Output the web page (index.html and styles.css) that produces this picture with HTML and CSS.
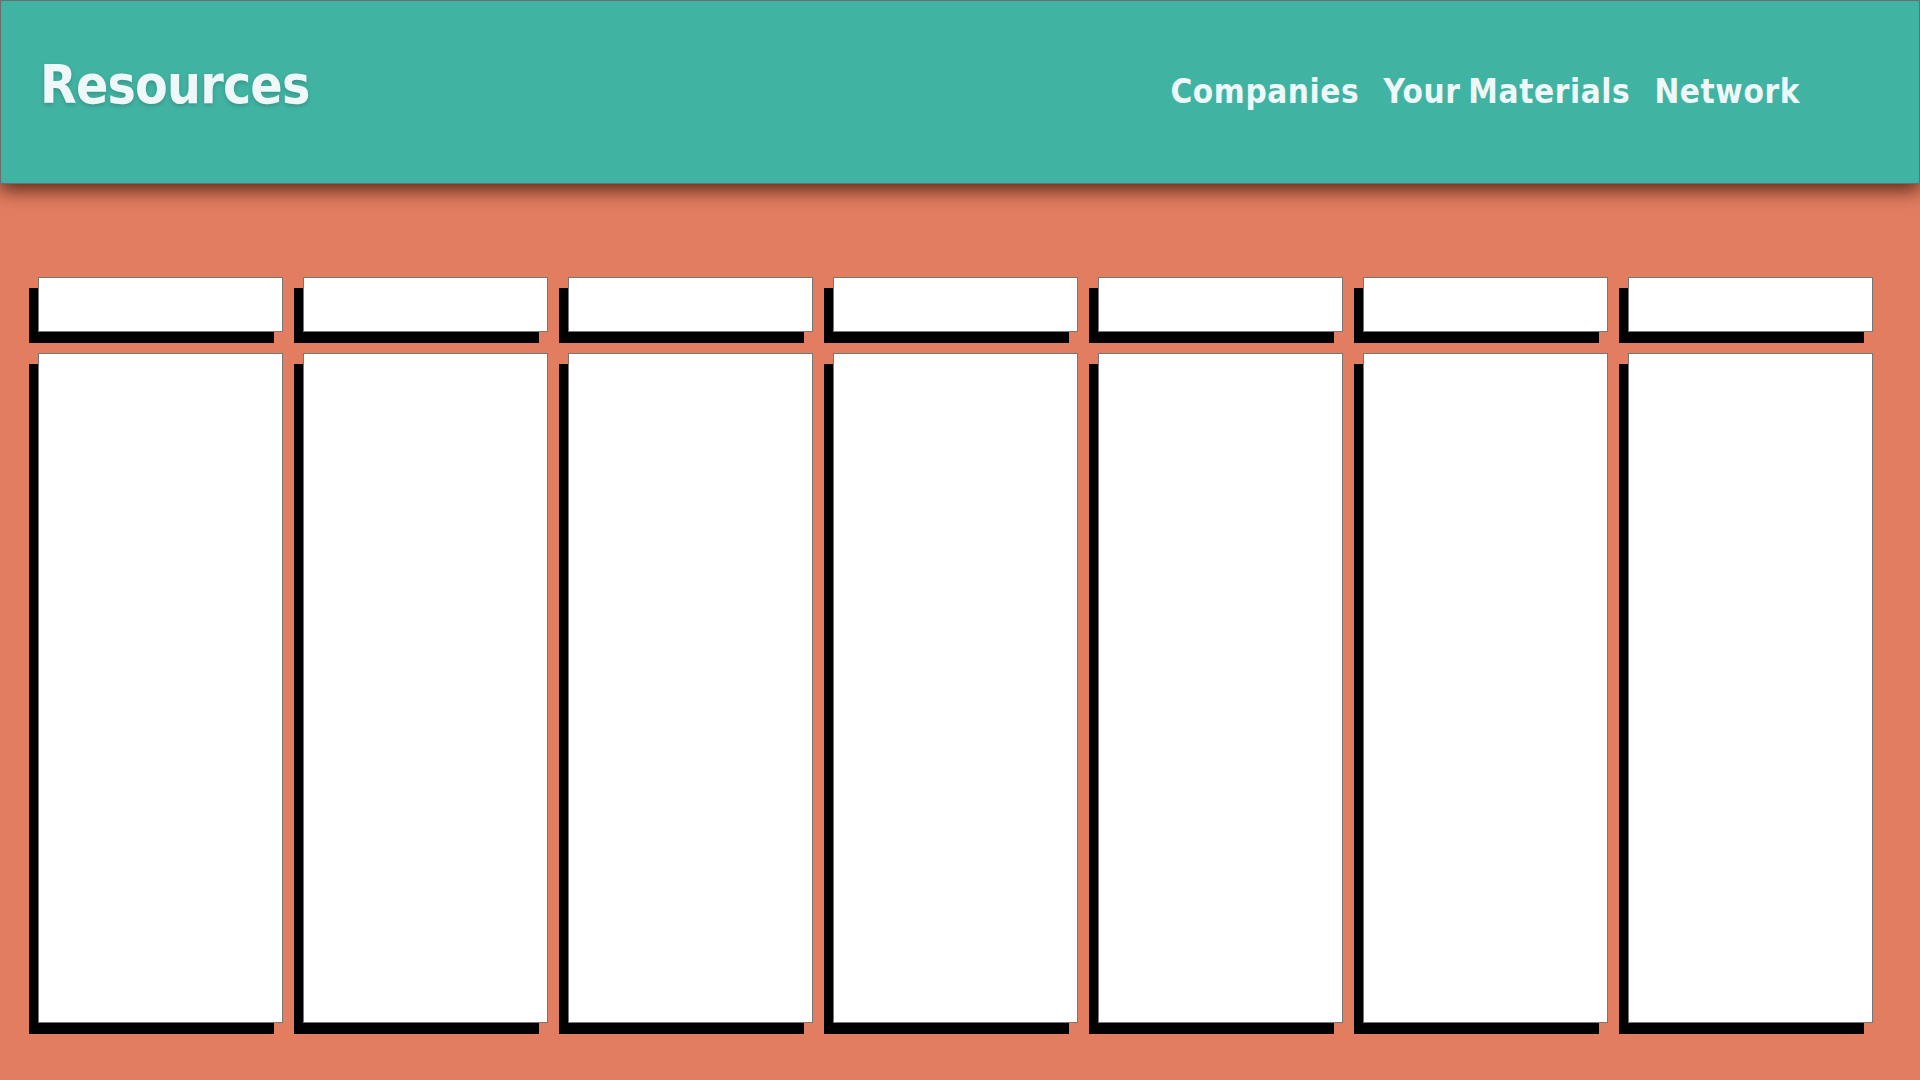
FILE: index.html
```html
<!DOCTYPE html>
<html>
<head>
<meta charset="utf-8">
<link rel="stylesheet" href="styles.css">
</head>
<body>
<header class="topbar">
  <h1 class="title">Resources</h1>
  <nav class="nav">
    <a class="nav-link">Companies</a>
    <a class="nav-link nav-link-tight">Your Materials</a>
    <a class="nav-link">Network</a>
  </nav>
</header>
<main class="board">
  <div class="col"><div class="card card-head"></div><div class="card card-body"></div></div>
  <div class="col"><div class="card card-head"></div><div class="card card-body"></div></div>
  <div class="col"><div class="card card-head"></div><div class="card card-body"></div></div>
  <div class="col"><div class="card card-head"></div><div class="card card-body"></div></div>
  <div class="col"><div class="card card-head"></div><div class="card card-body"></div></div>
  <div class="col"><div class="card card-head"></div><div class="card card-body"></div></div>
  <div class="col"><div class="card card-head"></div><div class="card card-body"></div></div>
</main>
</body>
</html>
```
FILE: styles.css
```css
* { box-sizing: border-box; }
html, body { margin: 0; padding: 0; }
body {
  background: #E27D60;
  width: 1920px;
  height: 1080px;
  overflow: hidden;
  font-family: "DejaVu Sans Condensed", "DejaVu Sans", sans-serif;
}
.topbar {
  position: relative;
  z-index: 2;
  height: 184px;
  background: #41B3A3;
  border: 1px solid #6e6e6e;
  box-shadow: 0 6px 18px rgba(40, 10, 0, 0.75);
  display: flex;
  align-items: baseline;
  justify-content: space-between;
  padding: 0 119px 0 39px;
}
.title {
  margin: 0;
  margin-top: 52px;
  font-size: 53px;
  font-weight: 600;
  letter-spacing: -0.8px;
  color: #EEF8F8;
  text-shadow: 0 2px 4px rgba(0, 0, 0, 0.18);
  line-height: 64px;
}
.nav {
  display: flex;
  gap: 24px;
}
.nav-link {
  font-size: 33px;
  font-weight: 600;
  color: #EEF8F8;
  letter-spacing: 0.6px;
}
.nav-link-tight { word-spacing: -3px; }
.board {
  display: flex;
  gap: 20px;
  padding: 93px 0 0 38px;
}
.col {
  display: flex;
  flex-direction: column;
  gap: 21px;
  width: 245px;
}
.card {
  background: #fff;
  border: 1px solid #777;
  box-shadow: -9px 11px 0 #000;
}
.card-head { height: 55px; }
.card-body { height: 670px; }
```
